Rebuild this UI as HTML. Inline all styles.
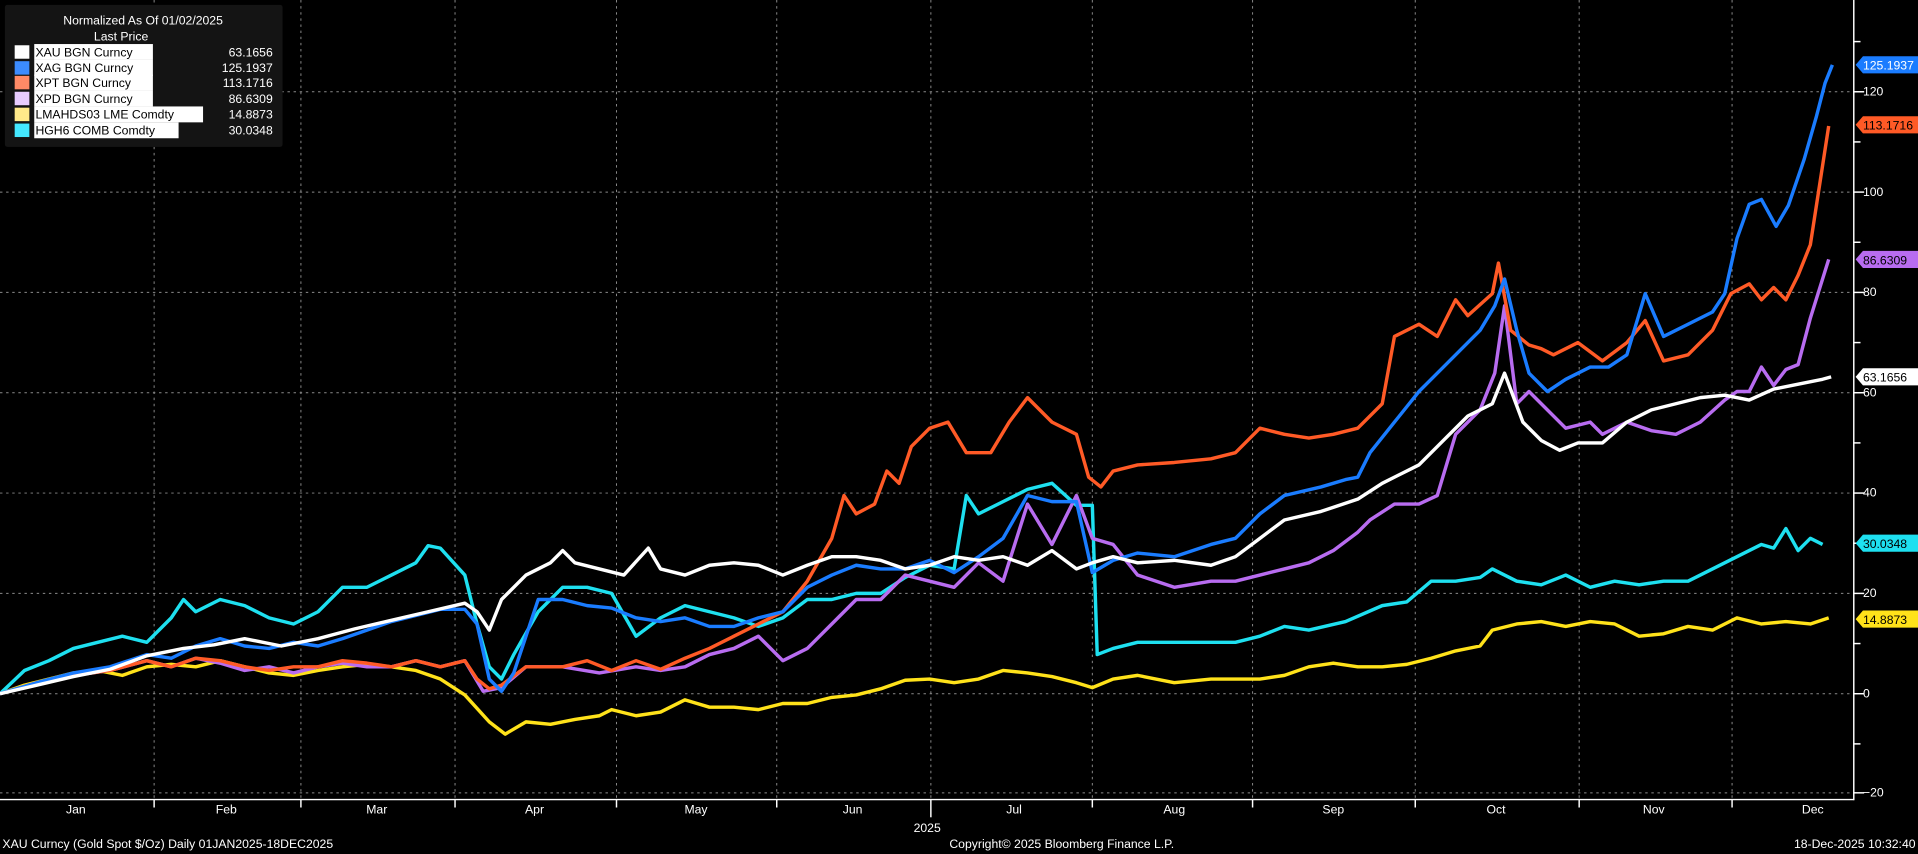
<!DOCTYPE html>
<html><head><meta charset="utf-8"><style>
html,body{margin:0;padding:0;background:#000;overflow:hidden}
svg{display:block}
text{font-family:"Liberation Sans",sans-serif}
</style></head><body>
<svg width="1918" height="854" viewBox="0 0 1568 698" preserveAspectRatio="none">
<rect width="1568" height="698" fill="#000"/>
<g stroke="#8a8a8a" stroke-width="0.8" stroke-dasharray="2,3">
<line x1="0" y1="75" x2="1515" y2="75"/><line x1="0" y1="157" x2="1515" y2="157"/>
<line x1="0" y1="239" x2="1515" y2="239"/><line x1="0" y1="321" x2="1515" y2="321"/>
<line x1="0" y1="403" x2="1515" y2="403"/><line x1="0" y1="485" x2="1515" y2="485"/>
<line x1="0" y1="567" x2="1515" y2="567"/><line x1="0" y1="648" x2="1515" y2="648"/>
<line x1="126" y1="0" x2="126" y2="653"/><line x1="246" y1="0" x2="246" y2="653"/>
<line x1="372" y1="0" x2="372" y2="653"/><line x1="504" y1="0" x2="504" y2="653"/>
<line x1="635" y1="0" x2="635" y2="653"/><line x1="761" y1="0" x2="761" y2="653"/>
<line x1="893" y1="0" x2="893" y2="653"/><line x1="1024" y1="0" x2="1024" y2="653"/>
<line x1="1157" y1="0" x2="1157" y2="653"/><line x1="1291" y1="0" x2="1291" y2="653"/>
<line x1="1416" y1="0" x2="1416" y2="653"/>
</g>
<g stroke="#fff" stroke-width="1.2">
<line x1="0" y1="653.5" x2="1516" y2="653.5"/><line x1="1515.5" y1="0" x2="1515.5" y2="654"/>
<line x1="1515" y1="34" x2="1521" y2="34"/><line x1="1515" y1="116" x2="1521" y2="116"/>
<line x1="1515" y1="198" x2="1521" y2="198"/><line x1="1515" y1="280" x2="1521" y2="280"/>
<line x1="1515" y1="362" x2="1521" y2="362"/><line x1="1515" y1="444" x2="1521" y2="444"/>
<line x1="1515" y1="526" x2="1521" y2="526"/><line x1="1515" y1="608" x2="1521" y2="608"/>
<line x1="1515" y1="75" x2="1524" y2="75"/><line x1="1515" y1="157" x2="1524" y2="157"/>
<line x1="1515" y1="239" x2="1524" y2="239"/><line x1="1515" y1="321" x2="1524" y2="321"/>
<line x1="1515" y1="403" x2="1524" y2="403"/><line x1="1515" y1="485" x2="1524" y2="485"/>
<line x1="1515" y1="567" x2="1524" y2="567"/><line x1="1515" y1="648" x2="1524" y2="648"/>
<line x1="126" y1="653" x2="126" y2="660"/><line x1="246" y1="653" x2="246" y2="660"/><line x1="372" y1="653" x2="372" y2="660"/><line x1="504" y1="653" x2="504" y2="660"/><line x1="635" y1="653" x2="635" y2="660"/><line x1="761" y1="653" x2="761" y2="668"/><line x1="893" y1="653" x2="893" y2="660"/><line x1="1024" y1="653" x2="1024" y2="660"/><line x1="1157" y1="653" x2="1157" y2="660"/><line x1="1291" y1="653" x2="1291" y2="660"/><line x1="1416" y1="653" x2="1416" y2="660"/>
</g>
<g fill="#fff" font-size="10">
<text x="1523" y="78">120</text><text x="1523" y="160">100</text><text x="1523" y="242">80</text>
<text x="1523" y="324">60</text><text x="1523" y="406">40</text><text x="1523" y="488">20</text>
<text x="1523" y="570">0</text><text x="1523" y="651">−20</text>
</g>
<g fill="#fff" font-size="10" text-anchor="middle">
<text x="62" y="665">Jan</text><text x="185" y="665">Feb</text><text x="308" y="665">Mar</text><text x="437" y="665">Apr</text><text x="569" y="665">May</text><text x="697" y="665">Jun</text><text x="829" y="665">Jul</text><text x="960" y="665">Aug</text><text x="1090" y="665">Sep</text><text x="1223" y="665">Oct</text><text x="1352" y="665">Nov</text><text x="1482" y="665">Dec</text>
<text x="758" y="680">2025</text>
<text x="868" y="693">Copyright© 2025 Bloomberg Finance L.P.</text>
</g>
<text x="2" y="693" fill="#fff" font-size="10">XAU Curncy (Gold Spot   $/Oz) Daily 01JAN2025-18DEC2025</text>
<text x="1566" y="693" fill="#fff" font-size="10" text-anchor="end">18-Dec-2025 10:32:40</text>
<g fill="none" stroke-width="2.8" stroke-linejoin="round">
<polyline stroke="#ffe21a" points="0,567 20,560 40,555 60,550 80,548 100,552 120,545 140,543 160,545 180,540 200,545 220,550 240,552 260,548 280,545 300,543 320,545 340,548 360,555 380,568 400,590 413,600 430,590 450,592 470,588 490,585 500,580 520,585 540,582 560,572 580,578 600,578 620,580 640,575 660,575 680,570 700,568 720,563 740,556 760,555 780,558 800,555 820,548 840,550 860,553 880,558 893,562 910,555 930,552 960,558 990,555 1010,555 1030,555 1050,552 1070,545 1090,542 1110,545 1130,545 1150,543 1170,538 1190,532 1210,528 1220,515 1240,510 1260,508 1280,512 1300,508 1320,510 1340,520 1360,518 1380,512 1400,515 1420,505 1440,510 1460,508 1480,510 1495,505"/>
<polyline stroke="#1ee0f0" points="0,567 20,548 40,540 60,530 80,525 100,520 120,525 140,505 150,490 160,500 180,490 200,495 220,505 240,510 260,500 280,480 300,480 320,470 340,460 350,446 360,448 380,470 390,510 400,545 410,555 420,535 440,500 460,480 480,480 500,485 520,520 540,505 560,495 580,500 600,505 620,512 640,505 660,490 680,490 700,485 720,485 740,472 760,462 780,465 790,405 800,420 820,410 840,400 860,395 880,413 893,413 897,535 910,530 930,525 960,525 990,525 1010,525 1030,520 1050,512 1070,515 1100,508 1130,495 1150,492 1170,475 1190,475 1210,472 1220,465 1240,475 1260,478 1280,470 1300,480 1320,475 1340,478 1360,475 1380,475 1400,465 1420,455 1440,445 1450,448 1460,432 1470,450 1480,440 1490,445"/>
<polyline stroke="#b86cf0" points="0,567 30,558 60,552 90,548 120,540 140,545 160,538 180,542 200,548 220,545 240,550 260,545 280,542 300,545 320,545 340,540 360,545 380,540 395,565 410,562 430,545 460,545 490,550 520,545 540,548 560,545 580,535 600,530 620,520 640,540 660,530 680,510 700,490 720,490 740,470 760,475 780,480 800,460 820,475 840,412 860,445 880,405 893,440 910,445 930,470 960,480 990,475 1010,475 1030,470 1050,465 1070,460 1090,450 1110,435 1120,425 1140,412 1160,412 1175,405 1190,355 1210,335 1222,305 1230,250 1240,330 1250,320 1260,330 1280,350 1300,345 1310,355 1330,345 1350,352 1370,355 1390,345 1410,327 1420,320 1430,320 1440,300 1450,315 1460,302 1470,298 1480,260 1495,212"/>
<polyline stroke="#ff5a26" points="0,567 30,558 60,552 90,548 120,540 140,545 160,538 180,540 200,545 220,548 240,545 260,545 280,540 300,542 320,545 340,540 360,545 380,540 390,555 400,563 410,560 430,545 460,545 480,540 500,548 520,540 540,547 560,538 580,530 600,520 620,510 640,500 660,475 680,440 690,405 700,420 715,412 725,385 735,395 745,365 760,350 775,345 790,370 810,370 825,345 840,325 860,345 880,355 890,390 900,398 910,385 930,380 960,378 990,375 1010,370 1030,350 1050,355 1070,358 1090,355 1110,350 1130,330 1140,275 1160,265 1175,275 1190,245 1200,258 1220,240 1225,215 1235,270 1250,282 1260,285 1270,290 1290,280 1310,295 1330,280 1345,262 1360,295 1380,290 1400,270 1415,240 1430,232 1440,245 1450,235 1460,245 1470,225 1480,200 1495,103"/>
<polyline stroke="#1a7cff" points="0,567 30,558 60,550 90,545 120,535 140,538 160,528 180,522 200,528 220,530 240,525 260,528 280,522 300,515 320,508 340,503 360,498 380,498 390,510 400,555 410,565 420,550 440,490 460,490 480,495 500,497 520,505 540,508 560,505 580,512 600,512 620,505 640,500 660,480 680,470 700,462 720,465 740,465 760,458 780,468 800,455 820,440 840,405 860,410 880,410 893,468 910,458 930,452 960,455 990,445 1010,440 1030,420 1050,405 1080,398 1100,392 1110,390 1120,370 1140,345 1160,320 1180,300 1195,285 1210,270 1222,250 1230,228 1240,270 1250,305 1265,320 1280,310 1300,300 1315,300 1330,290 1345,240 1360,275 1380,265 1400,255 1410,240 1420,195 1430,167 1440,163 1452,185 1462,168 1475,130 1485,95 1492,68 1498,53"/>
<polyline stroke="#ffffff" points="0,567 30,560 60,553 90,547 120,536 150,530 175,527 200,522 230,528 260,522 290,514 320,507 350,500 380,493 390,500 400,515 410,490 430,470 450,460 460,450 470,460 490,465 510,470 530,448 540,465 560,470 580,462 600,460 620,462 640,470 660,462 680,455 700,455 720,458 740,465 760,462 780,455 800,458 820,455 840,462 860,450 880,465 893,460 910,455 930,460 960,458 990,462 1010,455 1030,440 1050,425 1080,418 1110,408 1130,395 1160,380 1180,360 1200,340 1220,330 1230,305 1245,345 1260,360 1275,368 1290,362 1310,362 1330,345 1350,335 1370,330 1390,325 1410,323 1430,327 1450,318 1470,314 1490,310 1497,308"/>
</g>
<g font-size="10">
<path d="M1517,53 l6,-7 h45 v14 h-45 z" fill="#1a7cff"/><text x="1523" y="57" fill="#fff">125.1937</text>
<path d="M1517,102 l6,-7 h45 v14 h-45 z" fill="#ff5a26"/><text x="1523" y="106" fill="#000">113.1716</text>
<path d="M1517,212 l6,-7 h45 v14 h-45 z" fill="#b86cf0"/><text x="1523" y="216" fill="#000">86.6309</text>
<path d="M1517,308 l6,-7 h45 v14 h-45 z" fill="#fff"/><text x="1523" y="312" fill="#000">63.1656</text>
<path d="M1517,444 l6,-7 h45 v14 h-45 z" fill="#1ee0f0"/><text x="1523" y="448" fill="#000">30.0348</text>
<path d="M1517,506 l6,-7 h45 v14 h-45 z" fill="#ffe21a"/><text x="1523" y="510" fill="#000">14.8873</text>
</g>
<rect x="4" y="4" width="227" height="116" rx="2" fill="#141414"/>
<g font-size="10">
<text x="117" y="20" fill="#fff" text-anchor="middle">Normalized As Of 01/02/2025</text>
<text x="99" y="33" fill="#fff" text-anchor="middle">Last Price</text>
<rect x="12" y="37" width="12" height="11" fill="#fff"/><rect x="28" y="36" width="97" height="13" fill="#fff"/><text x="29" y="46" fill="#000">XAU BGN Curncy</text><text x="223" y="46" fill="#fff" text-anchor="end">63.1656</text>
<rect x="12" y="50" width="12" height="11" fill="#3c8cff"/><rect x="28" y="49" width="97" height="13" fill="#fff"/><text x="29" y="59" fill="#000">XAG BGN Curncy</text><text x="223" y="59" fill="#fff" text-anchor="end">125.1937</text>
<rect x="12" y="62" width="12" height="11" fill="#ff8a66"/><rect x="28" y="61" width="97" height="13" fill="#fff"/><text x="29" y="71" fill="#000">XPT BGN Curncy</text><text x="223" y="71" fill="#fff" text-anchor="end">113.1716</text>
<rect x="12" y="75" width="12" height="11" fill="#e8ccff"/><rect x="28" y="74" width="97" height="13" fill="#fff"/><text x="29" y="84" fill="#000">XPD BGN Curncy</text><text x="223" y="84" fill="#fff" text-anchor="end">86.6309</text>
<rect x="12" y="88" width="12" height="11" fill="#ffe98a"/><rect x="28" y="87" width="138" height="13" fill="#fff"/><text x="29" y="97" fill="#000">LMAHDS03 LME Comdty</text><text x="223" y="97" fill="#fff" text-anchor="end">14.8873</text>
<rect x="12" y="101" width="12" height="11" fill="#44e8ff"/><rect x="28" y="100" width="118" height="13" fill="#fff"/><text x="29" y="110" fill="#000">HGH6 COMB Comdty</text><text x="223" y="110" fill="#fff" text-anchor="end">30.0348</text>
</g>
</svg>
</body></html>
